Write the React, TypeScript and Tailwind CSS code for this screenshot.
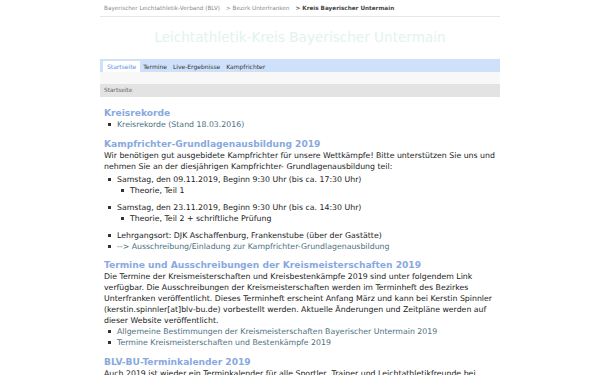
import React from "react";

const Bullet = () => <span className="mt-[4px] mr-[6px] inline-block h-[3px] w-[3px] shrink-0 bg-[#333]" />;

function Item({ children, link }: { children: React.ReactNode; link?: boolean }) {
  return (
    <li className={`flex items-start ${link ? "text-[#4d7080]" : "text-[#222]"}`}>
      <Bullet />
      <span>{children}</span>
    </li>
  );
}

function Heading({ children }: { children: React.ReactNode }) {
  return <h2 className="text-[9.1px] leading-[12px] font-bold text-[#88a9df]">{children}</h2>;
}

export default function App() {
  return (
    <div className="min-h-[375px] bg-white font-['DejaVu_Sans',sans-serif] text-[7.8px] leading-[11px] text-[#222]">
      <div className="mx-auto w-[400px]">
        {/* Breadcrumb */}
        <div className="flex gap-[6px] border-b border-[#e6e6e6] pt-[5px] pb-[4px] pl-[4px] text-[5.7px] leading-[7px] text-[#8a8a8a]">
          <span>Bayerischer Leichtathletik-Verband (BLV)</span>
          <span>&gt; Bezirk Unterfranken</span>
          <span className="font-bold text-[#444]">&gt; Kreis Bayerischer Untermain</span>
        </div>

        {/* Title */}
        <div className="pt-[10px] pb-[12px] text-center text-[13.6px] leading-[20px] text-[#e3f3ec]">
          Leichtathletik-Kreis Bayerischer Untermain
        </div>

        {/* Navigation */}
        <div className="flex h-[13px] items-end bg-[#cfe1fa] pl-[3px] text-[6px] leading-[11px]">
          <span className="bg-white px-[4px] text-[#5a8fdc]">Startseite</span>
          <span className="px-[3px] text-[#333]">Termine</span>
          <span className="px-[3px] text-[#333]">Live-Ergebnisse</span>
          <span className="px-[3px] text-[#333]">Kampfrichter</span>
        </div>
        <div className="h-[12px] bg-[#f8f8f8]" />
        <div className="flex h-[13px] items-center bg-[#e3e3e3] pl-[4px] text-[5.8px] text-[#666]">Startseite</div>

        {/* Content */}
        <div className="pl-[4px] pt-[10px]">
          <Heading>Kreisrekorde</Heading>
          <ul className="pl-[4px]">
            <Item link>Kreisrekorde (Stand 18.03.2016)</Item>
          </ul>

          <div className="mt-[7.5px]">
            <Heading>Kampfrichter-Grundlagenausbildung 2019</Heading>
            <p>
              Wir benötigen gut ausgebidete Kampfrichter für unsere Wettkämpfe! Bitte unterstützen Sie uns und nehmen Sie an
              der diesjährigen Kampfrichter- Grundlagenausbildung teil:
            </p>
            <ul className="mt-[2px] pl-[4px]">
              <li className="mb-[6px]">
                <div className="flex items-start">
                  <Bullet />
                  <span>Samstag, den 09.11.2019, Beginn 9:30 Uhr (bis ca. 17:30 Uhr)</span>
                </div>
                <ul className="pl-[13px]">
                  <Item>Theorie, Teil 1</Item>
                </ul>
              </li>
              <li className="mb-[6px]">
                <div className="flex items-start">
                  <Bullet />
                  <span>Samstag, den 23.11.2019, Beginn 9:30 Uhr (bis ca. 14:30 Uhr)</span>
                </div>
                <ul className="pl-[13px]">
                  <Item>Theorie, Teil 2 + schriftliche Prüfung</Item>
                </ul>
              </li>
              <Item>Lehrgangsort: DJK Aschaffenburg, Frankenstube (über der Gastätte)</Item>
              <Item link>--&gt; Ausschreibung/Einladung zur Kampfrichter-Grundlagenausbildung</Item>
            </ul>
          </div>

          <div className="mt-[7.5px]">
            <Heading>Termine und Ausschreibungen der Kreismeisterschaften 2019</Heading>
            <p>
              Die Termine der Kreismeisterschaften und Kreisbestenkämpfe 2019 sind unter folgendem Link verfügbar. Die
              Ausschreibungen der Kreismeisterschaften werden im Terminheft des Bezirkes Unterfranken veröffentlicht. Dieses
              Terminheft erscheint Anfang März und kann bei Kerstin Spinnler (kerstin.spinnler[at]blv-bu.de) vorbestellt
              werden. Aktuelle Änderungen und Zeitpläne werden auf dieser Website veröffentlicht.
            </p>
            <ul className="pl-[4px]">
              <Item link>Allgemeine Bestimmungen der Kreismeisterschaften Bayerischer Untermain 2019</Item>
              <Item link>Termine Kreismeisterschaften und Bestenkämpfe 2019</Item>
            </ul>
          </div>

          <div className="mt-[7.5px]">
            <Heading>BLV-BU-Terminkalender 2019</Heading>
            <p>
              Auch 2019 ist wieder ein Terminkalender für alle Sportler, Trainer und Leichtathletikfreunde bei Kerstin
              Spinnler erhältlich.
            </p>
          </div>
        </div>
      </div>
    </div>
  );
}
